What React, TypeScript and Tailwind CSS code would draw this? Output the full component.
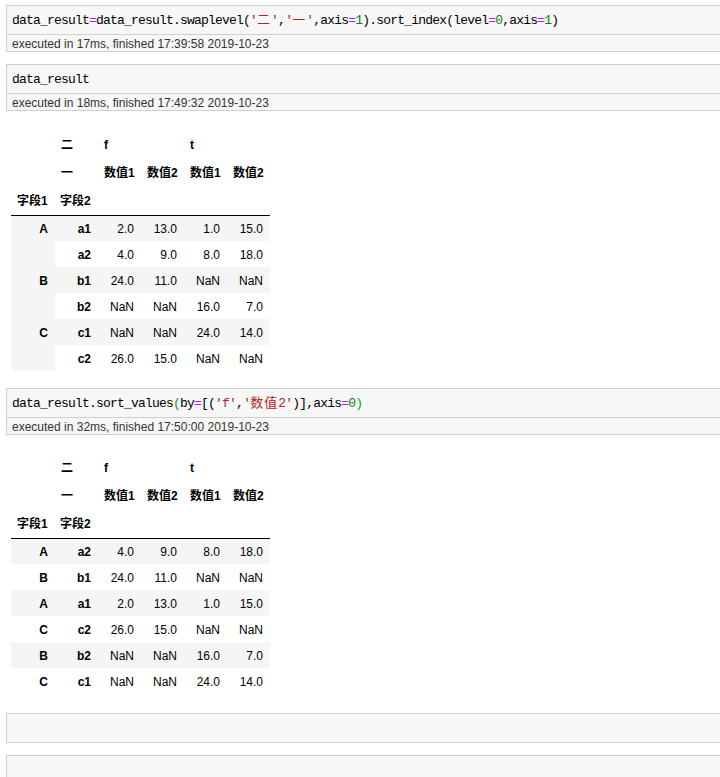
import React from 'react';

const C = {
  op: 'text-[#aa22ff]',
  str: 'text-[#ba2121]',
  num: 'text-[#008800]',
  br: 'text-[#00aa00]',
};

const cjk = (s: string) => <span className="tracking-[1px]">{s}</span>;

const CodeCell: React.FC<{ code?: React.ReactNode; exec?: string }> = ({ code, exec }) => (
  <div className="ml-[6px] border border-r-0 border-[#cfcfcf] bg-[#f7f7f7]">
    <div className="h-[28px] flex items-center pt-[2px] px-[5px] whitespace-pre text-[13px] tracking-[-0.8px] text-black font-['Liberation_Mono','Noto_Sans_CJK_SC',monospace]">
      {code}
    </div>
    {exec && (
      <div className="h-[17px] flex items-center pt-[1px] border-t border-[#cfcfcf] px-[5px] text-[12px] text-[#333] font-['Liberation_Sans',Arial,sans-serif]">
        {exec}
      </div>
    )}
  </div>
);

type Row = { i1: string; i2: string; vals: string[]; shade: boolean; idxShade?: boolean };

const DataTable: React.FC<{ rows: Row[]; className?: string }> = ({ rows, className }) => (
  <table className={`ml-[11px] table-fixed border-collapse text-[12px] text-black font-['Liberation_Sans','Noto_Sans_CJK_SC',sans-serif] ${className ?? ''}`}>
    <colgroup>
      <col className="w-[44px]" />
      <col className="w-[43px]" />
      <col className="w-[43px]" />
      <col className="w-[43px]" />
      <col className="w-[43px]" />
      <col className="w-[43px]" />
    </colgroup>
    <thead>
      <tr className="h-[28px] font-bold">
        <th className="p-0" />
        <th className="px-[6px] text-left">二</th>
        <th colSpan={2} className="px-[6px] text-left">f</th>
        <th colSpan={2} className="px-[6px] text-left">t</th>
      </tr>
      <tr className="h-[28px] font-bold">
        <th className="p-0" />
        <th className="px-[6px] text-left">一</th>
        <th className="px-[6px] text-left">数值1</th>
        <th className="px-[6px] text-left">数值2</th>
        <th className="px-[6px] text-left">数值1</th>
        <th className="px-[6px] text-left">数值2</th>
      </tr>
      <tr className="h-[28px] font-bold border-b border-black">
        <th className="px-[6px] text-left">字段1</th>
        <th className="px-[5px] text-left">字段2</th>
        <th />
        <th />
        <th />
        <th />
      </tr>
    </thead>
    <tbody>
      {rows.map((r, k) => (
        <tr key={k} className={`h-[26px] ${r.shade ? 'bg-[#f5f5f5]' : 'bg-white'}`}>
          <td className={`pr-[7px] pt-[1px] text-right font-bold ${r.idxShade ? 'bg-[#f5f5f5]' : ''}`}>{r.i1}</td>
          <td className="pr-[7px] pt-[1px] text-right font-bold">{r.i2}</td>
          {r.vals.map((v, j) => (
            <td key={j} className="pr-[7px] pt-[1px] text-right">{v}</td>
          ))}
        </tr>
      ))}
    </tbody>
  </table>
);

const rows1: Row[] = [
  { i1: 'A', i2: 'a1', vals: ['2.0', '13.0', '1.0', '15.0'], shade: true },
  { i1: '', i2: 'a2', vals: ['4.0', '9.0', '8.0', '18.0'], shade: false, idxShade: true },
  { i1: 'B', i2: 'b1', vals: ['24.0', '11.0', 'NaN', 'NaN'], shade: true },
  { i1: '', i2: 'b2', vals: ['NaN', 'NaN', '16.0', '7.0'], shade: false, idxShade: true },
  { i1: 'C', i2: 'c1', vals: ['NaN', 'NaN', '24.0', '14.0'], shade: true },
  { i1: '', i2: 'c2', vals: ['26.0', '15.0', 'NaN', 'NaN'], shade: false, idxShade: true },
];

const rows2: Row[] = [
  { i1: 'A', i2: 'a2', vals: ['4.0', '9.0', '8.0', '18.0'], shade: true },
  { i1: 'B', i2: 'b1', vals: ['24.0', '11.0', 'NaN', 'NaN'], shade: false },
  { i1: 'A', i2: 'a1', vals: ['2.0', '13.0', '1.0', '15.0'], shade: true },
  { i1: 'C', i2: 'c2', vals: ['26.0', '15.0', 'NaN', 'NaN'], shade: false },
  { i1: 'B', i2: 'b2', vals: ['NaN', 'NaN', '16.0', '7.0'], shade: true },
  { i1: 'C', i2: 'c1', vals: ['NaN', 'NaN', '24.0', '14.0'], shade: false },
];

export default function App() {
  const code1 = (
    <>
      data_result<span className={C.op}>=</span>data_result.swaplevel(
      <span className={C.str}>'{cjk('二')}'</span>,<span className={C.str}>'{cjk('一')}'</span>,axis
      <span className={C.op}>=</span><span className={C.num}>1</span>).sort_index(level
      <span className={C.op}>=</span><span className={C.num}>0</span>,axis<span className={C.op}>=</span>
      <span className={C.num}>1</span>)
    </>
  );

  const code3 = (
    <>
      data_result.sort_values<span className={C.br}>(</span>by<span className={C.op}>=</span>[(
      <span className={C.str}>'f'</span>,<span className={C.str}>'{cjk('数值')}2'</span>)],axis
      <span className={C.op}>=</span><span className={C.num}>0</span><span className={C.br}>)</span>
    </>
  );

  return (
    <div className="w-[720px] min-h-[777px] bg-white pt-[5px] overflow-hidden">
      <CodeCell code={code1} exec="executed in 17ms, finished 17:39:58 2019-10-23" />
      <div className="mt-[12px]">
        <CodeCell code="data_result" exec="executed in 18ms, finished 17:49:32 2019-10-23" />
      </div>
      <DataTable rows={rows1} className="mt-[20px]" />
      <div className="mt-[17px]">
        <CodeCell code={code3} exec="executed in 32ms, finished 17:50:00 2019-10-23" />
      </div>
      <DataTable rows={rows2} className="mt-[19px]" />
      <div className="mt-[19px]">
        <CodeCell />
      </div>
      <div className="mt-[12px]">
        <CodeCell />
      </div>
    </div>
  );
}
